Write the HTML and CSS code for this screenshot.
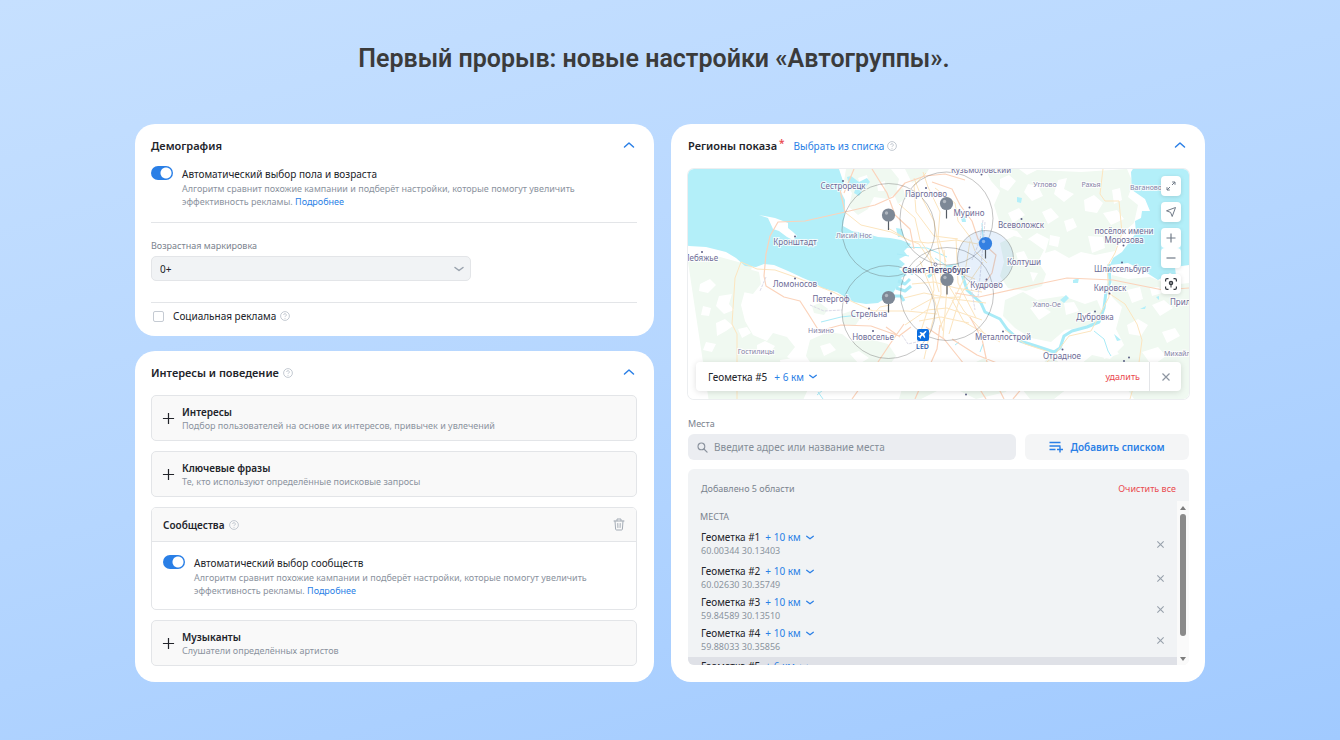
FILE: index.html
```html
<!DOCTYPE html>
<html lang="ru">
<head>
<meta charset="utf-8">
<meta name="viewport" content="width=device-width, initial-scale=1">
<title>Новые настройки «Автогруппы»</title>
<link rel="stylesheet" href="styles.css">
</head>
<body>
<svg class="sprite" aria-hidden="true">
  <symbol id="i-up" viewBox="0 0 12 8"><path d="M1.5 6 6 2l4.500 4" fill="none" stroke="currentColor" stroke-width="1.500" stroke-linecap="round" stroke-linejoin="round"/></symbol>
  <symbol id="i-down" viewBox="0 0 12 8"><path d="M2 2.500 6 5.500 10 2.500" fill="none" stroke="currentColor" stroke-width="1.500" stroke-linecap="round" stroke-linejoin="round"/></symbol>
  <symbol id="i-help" viewBox="0 0 10 10"><circle cx="5" cy="5" r="4.400" fill="none" stroke="currentColor" stroke-width=".8"/><path d="M3.700 4a1.300 1.300 0 1 1 1.900 1.100c-.5.300-.6.500-.6.900" fill="none" stroke="currentColor" stroke-width=".8"/><circle cx="5" cy="7.300" r=".5" fill="currentColor"/></symbol>
  <symbol id="i-plus" viewBox="0 0 14 14"><path d="M7 1v12M1 7h12" stroke="currentColor" stroke-width="1.300"/></symbol>
  <symbol id="i-close" viewBox="0 0 10 10"><path d="m1.500 1.500 7 7m0-7-7 7" stroke="currentColor" stroke-width="1.200"/></symbol>
</svg>
<main class="page">
  <h1 class="headline">Первый прорыв: новые настройки «Автогруппы».</h1>
  <div class="columns">
    <div class="left">
      <section class="card demography">
        <header class="card-head">
          <h2>Демография</h2>
          <button class="icon-btn collapse" aria-label="Свернуть"><svg class="chev"><use href="#i-up"/></svg></button>
        </header>
        <div class="switch-row">
          <input class="switch" type="checkbox" id="auto-age" checked>
          <div>
            <label class="switch-title" for="auto-age">Автоматический выбор пола и возраста</label>
            <p class="desc">Алгоритм сравнит похожие кампании и подберёт настройки, которые помогут увеличить эффективность рекламы. <a href="#">Подробнее</a></p>
          </div>
        </div>
        <div class="marking">
          <label class="field-label" for="age">Возрастная маркировка</label>
          <div class="select-wrap">
            <select id="age"><option>0+</option></select>
            <svg class="chev"><use href="#i-down"/></svg>
          </div>
        </div>
        <div class="social">
          <input class="check" type="checkbox" id="social">
          <label for="social">Социальная реклама</label>
          <svg class="help"><use href="#i-help"/></svg>
        </div>
      </section>

      <section class="card interests">
        <header class="card-head">
          <h2>Интересы и поведение</h2>
          <svg class="help"><use href="#i-help"/></svg>
          <button class="icon-btn collapse" aria-label="Свернуть"><svg class="chev"><use href="#i-up"/></svg></button>
        </header>
        <div class="options">
          <button class="option"><svg class="plus"><use href="#i-plus"/></svg><span><b>Интересы</b><small>Подбор пользователей на основе их интересов, привычек и увлечений</small></span></button>
          <button class="option"><svg class="plus"><use href="#i-plus"/></svg><span><b>Ключевые фразы</b><small>Те, кто используют определённые поисковые запросы</small></span></button>
          <div class="community">
            <header class="community-head">
              <h3>Сообщества</h3>
              <svg class="help"><use href="#i-help"/></svg>
              <button class="icon-btn trash" aria-label="Удалить"><svg viewBox="0 0 12 13"><path d="M1 3h10M4 2.800V1h4v1.800M2 3l.6 8.200q.1.800.9.800h5q.8 0 .9-.8L10 3M4.800 5.500l.1 4M7.200 5.500l-.1 4" fill="none" stroke="currentColor" stroke-linecap="round"/></svg></button>
            </header>
            <div class="switch-row">
              <input class="switch" type="checkbox" id="auto-comm" checked>
              <div>
                <label class="switch-title" for="auto-comm">Автоматический выбор сообществ</label>
                <p class="desc">Алгоритм сравнит похожие кампании и подберёт настройки, которые помогут увеличить эффективность рекламы. <a href="#">Подробнее</a></p>
              </div>
            </div>
          </div>
          <button class="option"><svg class="plus"><use href="#i-plus"/></svg><span><b>Музыканты</b><small>Слушатели определённых артистов</small></span></button>
        </div>
      </section>
    </div>

    <section class="card regions">
      <header class="card-head">
        <h2>Регионы показа<sup class="req">*</sup></h2>
        <a class="pick" href="#">Выбрать из списка</a>
        <svg class="help"><use href="#i-help"/></svg>
        <button class="icon-btn collapse" aria-label="Свернуть"><svg class="chev"><use href="#i-up"/></svg></button>
      </header>

      <div class="map">
        <svg class="map-art" viewBox="688 169 501 230" preserveAspectRatio="xMidYMid slice" role="img" aria-label="Карта Санкт-Петербурга">
          <rect x="688" y="169" width="501" height="230" fill="#fff"/>
          <g class="wood">
            <path d="M688 262l10-7 22 2 22 6 10 4-5 16-6 22 4 16 8 14 14 6 6-8 14 4 8 10-8 10 14 8 8 22-10 22h-89z"/>
            <path d="M846 169h45l8 10-3 14-8 6-14-2-6 12-10 6-9-8 3-14-8-12z"/>
            <path d="M905 169h24l-5 8-12 6zM893 192l10-4 3 10-8 6zM745 268l14 4 2 12-8 10-10-2z"/>
            <path d="M810 340l18-8 14 2 10 8 14-4 22 6 8 12-10 14-24-4-18 12-26-4-12-18zM842 314l12-4 7 7-6 9-12-2zM812 306l8-3 8 6-4 6-10-2z"/>
            <path d="M985 169l34 0 8 6 10-5 44 2 46-3 6 14-5 14 10 8-4 18-14 12-5 16-20 4-14-3-12 6-14-8-10 3 4-14-12-6-12 8-8-10-16-4-7-22 6-14-9-10z"/>
            <path d="M1000 243l14-7 16 4 14 10-6 12 8 12-4 12-16 5-18-3-8-12 4-14z"/>
            <path d="M1005 300l18-8 14 8 26-4 22 8 12-4 6 14-12 12-26 4-14 12-20-4-16-10-12-12z"/>
            <path d="M1112 275l16 4 22-2 20 8 19-2v116h-55l-8-12 6-14-18-4-10 12-24 4-10-12 22-18 18 4 14-14-8-16 6-22-10-10z"/>
            <path d="M1050 355l12 10 16 6-6 14-18 14h-24l-8-10 12-14zM960 370l24-12 10 8 20 6-8 20-30 7-20-10zM905 378l30-4 8 14-22 11h-22z"/>
          </g>
          <g fill="#fff">
            <path d="M700 284l10-5 6 6-8 8-9-2zM719 296l13-2-3 10 5 6-10 4-8-8zM703 306l8 2-2 8-8-1zM716 323l9-4 8 7-7 5-9 5zM738 329l9-2 4 6-9 5zM797 325c9 2 14 8 12 17s-10 10-15 2-5-14 3-19zM757 345l8-4 10 5-6 9-12 0zM706 342l10 2-4 8-9-2zM780 360l14-2 4 8-16 4z"/>
            <path d="M858 178l9-3 2 8-8 3zM877 184l8-3-1 10-6 0zM1000 179l9-4 7 6-8 10-8-4zM1028 184l10 2 5 10-11 5-8-9zM1058 180l9-2-3 11 10 5-10 8-10-8zM1008 213l11-5 6 7-12 8zM1042 212l9-4 8 9-11 7zM1064 221l9-3 4 9-10 5zM1084 200l10-5 9 8-6 10-12-2zM1112 190l8-2 2 12-8 4zM1103 213l14-3 7 9-13 6zM1050 235l10 2-2 10-9-2zM1088 236l15 1 2 11-13 5zM1016 253l8-2 4 8-9 5zM1030 272l8 1-5 9zM1030 308l10-3 11 7-12 8zM1064 303l10-1 5 9-13 4zM1083 314l10-3-1 9-9 2zM1127 290l13-3 3 12-11 4zM1152 305l12-5 9 8-13 8zM1127 325l11-6 10 6-7 11-12-2zM1162 332l13-4 5 8-13 7zM1142 352l16-5 8 9-14 10zM1101 348l12-2 6 8-15 5zM820 346l10-3 6 7-12 6zM850 354l9-3 10 7-10 6zM1150 288l9-1 3 6-10 3z"/>
          </g>
          <g fill="#b3eff9">
            <path d="M688 169h151l5 15-3 8 4 8v13l-2 13 9 5 12 2 14 4 12 1 11 2 10 4-7 7 3 4-8 4 6 5-6 5 8 6-6 3 4 5-9 5-4 7-8 4-6 4-12 1-12-2-9-5-8-5-15-4-7-5-12-5-15-7-14-6-10-1-8 3-11-1-9-8-10-6-20-5-17-1-12-3z"/>
            <path d="M851 176l8 6 8-4 3 4-7 7-4 7-5-3 2-6-7-2-2-8zM896 228l6 1 2 8-6 0z"/>
            <path d="M1137 169h52v96l-14 2 1 9-6-3-12 7-14-9-16-8-18 2 3-7 9-6 14-19-1-12 6-3 1-7h8l-5-12-13-9-1-18 5-8z"/>
            <path d="M1017 197l5 1-1 5-4-1zM1073 280l6-2-1 5-5 0zM1060 300l6-5 3 3-5 5zM1114 334l7 6-4 1zM1156 297l3-1v4zM1140 309l6-3-1 3zM961 218l4-2 1 6-4 0z"/>
          </g>
          <path d="M759 215l16 3 8 3 5 2v5l5 4 4 4-4 4-6-3-8-6-6-2-5-11z" fill="#fff"/>
          <path d="M898 281l7 3 5-5M896 288l9 3 6-5M892 296l9 0 3 5M905 269l8 5" class="stream s3"/>
          <path d="M1109 264l1 18-4 10-2 16-5 14-12 5-15 4-8 5-4 12-6 4-18-6-16-5-13-12-7-10-15-7-4-9-14-13-5-16-10-7-14 2-10 8" class="stream s3"/>
          <path d="M982 223l1 14-5 6M1094 331l10 8 4 12 3 5M821 322l20-5 18-2M980 352l3-8M905 247l22 1 20 9M935 258l12 8 12-2M897 254l12 2M818 392l5 7M955 345l4-3M817 395l6-5" class="stream"/>
          <g class="road minor">
            <path d="M741 262l-6 16-3 46 5 10v65M741 262l16 7 18 1 20 7 20 8 18 7 20 10 20 9 34 0 30 3M846 213l15 12 30 7 13 6 15 6 12 18 8 30M914 178l7 18 13 25 3 17 3 18 1 38-9 30-8 35M923 172l5 15 12 25-2 25 8 25M899 204l16 14 5 22 12 18 14 23 18 30 20 22M888 228l22 13 18 2 28-3 22 4"/>
            <path d="M935 188l20 15 3 18 12 16 5 14 12 12M914 272l20 2 20-3 21 8M912 284l22-2 22 6 26 4M904 298l20-5 30 6 32 4M911 310l22-12 28-1M920 261l12 30 11 40M930 250l4 40-14 44M944 250l3 38-4 50M956 238l2 45 18 35M970 241l-6 38-25 50M983 262l-22 32-12 40M952 300l12 22 36 20M919 321l22-4 28 6M905 325l22-15 20-2 35 12M926 173l-12 12 2 27 18 24 24 3"/>
            <path d="M1103 169l-3 25 5 7h14l3 32-7 20-8 14 2 30-18 34-22 5-15 20-14 12M1110 294l15 10 12 20 5 16-4 30-8 29M1005 330l20 14 24 8M868 320l12-13 10-2"/>
          </g>
          <g class="road">
            <path d="M845 212l-40 9-27 1-8 14-4 18-2 22 2 10 18 11 16 4 9 14 10 16 22-6 30 1 28 10 12-9M845 212l-5-22M845 212l30-7 18-8 12-14 20-7 20-2 20 6M872 169l15 24 8 22 15 14 4 20M932 182l20 7 8 16 12 16 6 18 18 16-4 18-12 17M844 193l10-24M904 324l-14 20-18 27-20 28M926 327l18 12 20 25 22 35M940 325l-3 24-22 50M970 317l12 22 6 28 16 32M955 293l24 4 50-11 38-8 46 2 25 5 25 5 26-2M952 339l25 16 35 14M900 337l-14-10M1013 399l15-18"/>
          </g>
          <g class="rail"><path d="M766 277l-6 14M810 305l14 6 18-1M983 220l-3 20-8 20M970 280l5 30M902 335l6 9 13-3M985 222l-4 45-3 30"/></g>
          <g class="zones">
            <circle cx="888.5" cy="230" r="46.5"/><circle cx="946.5" cy="218.500" r="46.5"/>
            <circle cx="888.5" cy="312" r="46.5"/><circle cx="947" cy="294" r="46.5"/>
            <circle class="active" cx="985.5" cy="258.500" r="28"/>
          </g>
          <g class="towns">
            <g fill="#5d6187"><circle cx="843" cy="181" r="1"/><circle cx="926" cy="188" r="1"/><circle cx="795" cy="236.500" r="1"/><circle cx="702" cy="252" r="1"/><circle cx="795" cy="278.500" r="1"/><circle cx="831" cy="293.500" r="1"/><circle cx="869" cy="308.500" r="1"/><circle cx="873" cy="331" r="1"/><circle cx="969.5" cy="207.500" r="1"/><circle cx="1021.500" cy="219" r="1"/><circle cx="981.5" cy="174.500" r="1"/><circle cx="986.500" cy="279.500" r="1"/><circle cx="1003" cy="331.500" r="1"/><circle cx="1062.500" cy="349.500" r="1"/><circle cx="1095" cy="311.500" r="1"/><circle cx="1109.500" cy="293.500" r="1"/><circle cx="1123.500" cy="245.500" r="1"/><circle cx="1122" cy="262.500" r="1"/><circle cx="1129" cy="357.500" r="1"/><circle cx="1124" cy="361" r="1"/><circle cx="966" cy="394.500" r="1"/></g>
            <circle cx="935.5" cy="264.500" r="1.500" fill="#fff" stroke="#77799a"/>
            <text x="843" y="189">Сестрорецк</text><text x="926" y="197">Парголово</text><text x="981" y="172.500">Кузьмоловский</text>
            <text x="1045" y="187" class="minor-town">Углово</text><text x="1091" y="187" class="minor-town">Рахья</text><text x="1130" y="190" class="minor-town from-left">Ваганово</text>
            <text x="969" y="216">Мурино</text><text x="1021" y="228">Всеволожск</text><text x="854" y="238" class="minor-town">Лисий Нос</text>
            <text x="1124" y="234">посёлок имени</text><text x="1124" y="243">Морозова</text><text x="795" y="245">Кронштадт</text><text x="701" y="261">Лебяжье</text>
            <text x="1024" y="265">Колтуши</text><text x="936" y="273" class="city">Санкт-Петербург</text><text x="1122" y="272">Шлиссельбург</text><text x="986.500" y="288">Кудрово</text>
            <text x="795" y="287">Ломоносов</text><text x="1110" y="291">Кировск</text><text x="831" y="302">Петергоф</text><text x="1047" y="307" class="minor-town">Хапо-Ое</text>
            <text x="869" y="317">Стрельна</text><text x="1095" y="320">Дубровка</text><text x="1170" y="305" class="from-left">Приладожский</text><text x="821" y="333" class="minor-town">Низино</text>
            <text x="873" y="340">Новоселье</text><text x="1003" y="340">Металлострой</text><text x="1062" y="359">Отрадное</text><text x="756" y="354" class="minor-town">Гостилицы</text><text x="1164" y="356" class="minor-town from-left">Михайловский</text>
            <text x="922.500" y="349" class="airport">LED</text>
          </g>
          <rect x="917" y="329" width="12" height="12" rx="2" fill="#0b6ee0"/>
          <path d="M919.500 332.500l1-.6 2.500 1.100 2.200-2 1.200-.2-.2 1.200-2 2.200 1.100 3-.8.800-2.100-2.500-1.500 1.500v1.200l-.7.500-.8-1.500-1.500-.8.500-.7h1.200l1.500-1.500z" fill="#fff"/>
          <defs><g id="pin"><path d="M0 6v9" stroke="#555c64" stroke-width="1.200"/><circle r="6.600" fill="currentColor"/><circle cx="-2" cy="-2" r="1.700" fill="#fff" opacity=".4"/></g></defs>
          <g color="#7d8896"><use href="#pin" x="888.5" y="215"/><use href="#pin" x="946.5" y="203.500"/><use href="#pin" x="888.5" y="297.500"/><use href="#pin" x="947" y="279.500"/></g>
          <g color="#3480e2"><use href="#pin" x="985.5" y="243.500"/></g>
        </svg>
        <div class="map-tools">
          <button class="tool" aria-label="Развернуть"><svg viewBox="0 0 12 12"><path d="M7 5l3-3M7.200 2H10v2.800M5 7l-3 3M2 7.200V10h2.800" fill="none" stroke="currentColor"/></svg></button>
          <button class="tool" aria-label="Моё положение"><svg viewBox="0 0 12 12"><path d="M1.500 4.800 10.500 1.500 7.200 10.500 5.600 6.400z" fill="none" stroke="currentColor" stroke-linejoin="round"/></svg></button>
          <div class="zoom">
            <button class="tool" aria-label="Приблизить"><svg viewBox="0 0 12 12"><path d="M6 1.500v9M1.500 6h9" stroke="currentColor" stroke-width="1.200"/></svg></button>
            <button class="tool" aria-label="Отдалить"><svg viewBox="0 0 12 12"><path d="M1.500 6h9" stroke="currentColor" stroke-width="1.200"/></svg></button>
          </div>
          <button class="tool locate" aria-label="Поставить метку"><svg viewBox="0 0 12 12"><path d="M.6 3.500V2q0-1.400 1.400-1.400h1.500M8.500.6H10q1.400 0 1.400 1.400v1.500M11.400 8.500V10q0 1.400-1.400 1.400H8.500M3.500 11.400H2Q.6 11.400.6 10V8.500" fill="none" stroke="currentColor" stroke-width="1.200"/><circle cx="6" cy="5" r="1.500" fill="none" stroke="currentColor" stroke-width="1.500"/><path d="M6 6.500V9.500" stroke="currentColor"/></svg></button>
        </div>
        <div class="map-bar">
          <span class="geo-name">Геометка #5</span>
          <button class="radius">+ 6 км <svg class="mini"><use href="#i-down"/></svg></button>
          <button class="danger remove">удалить</button>
          <button class="icon-btn bar-close" aria-label="Закрыть"><svg><use href="#i-close"/></svg></button>
        </div>
      </div>

      <label class="field-label places-label" for="place">Места</label>
      <div class="search-row">
        <div class="search">
          <svg viewBox="0 0 12 12"><circle cx="4.800" cy="4.800" r="3.700" fill="none" stroke="currentColor" stroke-width="1.200"/><path d="m7.600 7.600 3.400 3.400" stroke="currentColor" stroke-width="1.300" stroke-linecap="round"/></svg>
          <input type="text" id="place" placeholder="Введите адрес или название места">
        </div>
        <button class="add-list"><svg viewBox="0 0 14 12"><path d="M.5 1.500h11M.5 5h11M.5 8.500h6M8 8.500h6M11 5.500v6" stroke="currentColor" stroke-width="1.400"/></svg>Добавить списком</button>
      </div>

      <div class="places">
        <header class="places-head"><span>Добавлено 5 области</span><button class="danger">Очистить все</button></header>
        <div class="scroll">
          <div class="list">
            <h3>МЕСТА</h3>
            <ul>
              <li><div><span class="geo-name">Геометка #1</span><button class="radius">+ 10 км <svg class="mini"><use href="#i-down"/></svg></button><p>60.00344 30.13403</p></div><button class="icon-btn" aria-label="Удалить"><svg><use href="#i-close"/></svg></button></li>
              <li><div><span class="geo-name">Геометка #2</span><button class="radius">+ 10 км <svg class="mini"><use href="#i-down"/></svg></button><p>60.02630 30.35749</p></div><button class="icon-btn" aria-label="Удалить"><svg><use href="#i-close"/></svg></button></li>
              <li><div><span class="geo-name">Геометка #3</span><button class="radius">+ 10 км <svg class="mini"><use href="#i-down"/></svg></button><p>59.84589 30.13510</p></div><button class="icon-btn" aria-label="Удалить"><svg><use href="#i-close"/></svg></button></li>
              <li><div><span class="geo-name">Геометка #4</span><button class="radius">+ 10 км <svg class="mini"><use href="#i-down"/></svg></button><p>59.88033 30.35856</p></div><button class="icon-btn" aria-label="Удалить"><svg><use href="#i-close"/></svg></button></li>
              <li class="current"><div><span class="geo-name">Геометка #5</span><button class="radius">+ 6 км <svg class="mini"><use href="#i-down"/></svg></button></div></li>
            </ul>
          </div>
          <div class="bar" aria-hidden="true"><i class="arrow up"></i><i class="thumb"></i><i class="arrow down"></i></div>
        </div>
      </div>
    </section>
  </div>
</main>
</body>
</html>
```

FILE: styles.css
```css
:root {
  --blue: #2a7fe6;
  --ink: #22242a;
  --muted: #8b939e;
  --line: #e3e5e8;
  --red: #ea4a4f;
}
* { box-sizing: border-box; }
body {
  margin: 0;
  min-height: 100vh;
  background: linear-gradient(165deg, #c6e0ff 0%, #b5d6ff 50%, #a1caff 100%);
  color: var(--ink);
  font: 10px/16px "Noto Sans", sans-serif;
}
h1, h2, h3, p, ul { margin: 0; padding: 0; }
ul { list-style: none; }
button, input, select { font: inherit; color: inherit; margin: 0; }
button { border: 0; padding: 0; background: none; cursor: pointer; }
a { color: var(--blue); text-decoration: none; }
svg { display: block; flex: none; }
.sprite { position: absolute; width: 0; height: 0; }

.page { padding: 43px 135px 58px; }
.headline {
  margin: 0 32px 49px 0;
  text-align: center;
  color: #3b3b3b;
  font: 600 25px/32px Roboto, sans-serif;
}
.columns { display: grid; grid-template-columns: 519fr 534fr; gap: 17px; }
.left { display: flex; flex-direction: column; gap: 15px; }
.card { background: #fff; border-radius: 20px; padding: 13px 17px 16px 16px; }
.card-head { display: flex; align-items: center; height: 18px; }
.card-head h2 { font-size: 11px; line-height: 18px; font-weight: 600; }
.collapse { margin-left: auto; color: var(--blue); padding: 0 2px 2px; }
.chev { width: 12px; height: 8px; }
.help { width: 10px; height: 10px; margin-left: 4px; color: #b5bcc6; }

.demography { padding-bottom: 12px; }
.switch-row { display: flex; gap: 9px; }
.demography .switch-row { margin-top: 11px; padding-bottom: 14px; border-bottom: 1px solid var(--line); }
.switch {
  appearance: none;
  flex: none;
  width: 22px;
  height: 14px;
  border-radius: 7px;
  background: radial-gradient(circle at 15px 7px, #fff 5px, var(--blue) 6px);
}
.switch-title { display: block; line-height: 16px; }
.desc { color: var(--muted); font-size: 9px; line-height: 13px; max-width: 430px; }
.field-label { display: block; color: #7b838e; font-size: 9px; line-height: 14px; margin-bottom: 3px; }
.marking { padding: 16px 0 21px; border-bottom: 1px solid var(--line); }
.select-wrap { position: relative; width: 320px; max-width: 100%; }
.select-wrap select {
  appearance: none;
  display: block;
  width: 100%;
  height: 25px;
  padding: 0 8px;
  border: 1px solid var(--line);
  border-radius: 5px;
  background: #f1f3f5;
}
.select-wrap .chev { position: absolute; right: 6px; top: 9px; color: #99a2ad; }
.select-wrap .chev, .mini { pointer-events: none; }
.social { display: flex; align-items: center; padding-top: 5px; }
.check { appearance: none; width: 11px; height: 11px; margin: 0 9px 0 2px; border: 1px solid #c5cbd3; border-radius: 2px; background: #fff; }

.options { display: flex; flex-direction: column; gap: 10px; margin-top: 13px; }
.option {
  display: flex;
  align-items: center;
  gap: 7px;
  height: 46px;
  padding: 0 10px;
  border: 1px solid var(--line);
  border-radius: 5px;
  background: #f9f9f9;
  text-align: left;
}
.option b, .option small { display: block; }
.option b { line-height: 14px; font-weight: 600; }
.option small { color: var(--muted); font-size: 9px; line-height: 13px; }
.plus { width: 13px; height: 13px; }
.community { border: 1px solid var(--line); border-radius: 5px; overflow: hidden; }
.community-head { display: flex; align-items: center; height: 34px; padding: 0 11px; background: #f9f9f9; border-bottom: 1px solid var(--line); }
.community-head h3 { font-size: 10px; font-weight: 600; }
.trash { margin-left: auto; color: #a3abb5; }
.trash svg { width: 12px; height: 13px; }
.community .switch-row { padding: 13px 11px 12px; }

.regions { padding: 13px 16px 17px 17px; }
.req { color: var(--red); font-size: 10px; line-height: 0; margin-left: 2px; vertical-align: 3px; }
.pick { margin-left: 9px; }
.regions .card-head .help { margin-left: 3px; }
.regions .card-head .collapse { padding: 0 3px 2px; }
.map { position: relative; height: 230px; margin-top: 14px; border-radius: 6px; overflow: hidden; box-shadow: 0 0 0 1px #eceef0; }
.map-art { width: 100%; height: 100%; }
.wood { fill: #f0f9f1; }
.stream { fill: none; stroke: #a9ebf7; stroke-width: 1; stroke-linejoin: round; }
.s3 { stroke-width: 3; }
.road { fill: none; stroke: #fbd3bb; stroke-width: 1.2; stroke-linejoin: round; }
.road.minor { stroke: #fce5bf; stroke-width: 1; }
.rail { fill: none; stroke: #dcdbe8; stroke-width: 1; stroke-dasharray: 3 1; }
.zones { fill: none; stroke: #555; stroke-opacity: .35; }
.zones .active { fill: #3480e2; fill-opacity: .12; }
.towns text {
  font: 8px "Noto Sans", sans-serif;
  fill: #6d6b96;
  text-anchor: middle;
  paint-order: stroke;
  stroke: #fff;
  stroke-opacity: .8;
  stroke-width: 2px;
}
.towns .minor-town { font-size: 7px; fill: #8583a6; }
.towns .from-left { text-anchor: start; }
.towns .city { font-weight: 600; fill: #5b5982; }
.towns .airport { font-size: 7px; font-weight: 600; fill: #2a5db0; }
.map-tools { position: absolute; top: 7px; right: 8px; display: flex; flex-direction: column; gap: 6px; }
.tool { display: grid; place-items: center; width: 20px; height: 20px; border-radius: 4px; background: #fff; color: #707a87; }
.tool svg { width: 12px; height: 12px; }
.map-tools > * { box-shadow: 0 1px 4px #0002; border-radius: 4px; }
.locate { color: #33383f; }
.map-bar {
  position: absolute;
  left: 8px;
  right: 8px;
  bottom: 8px;
  display: flex;
  align-items: center;
  height: 29px;
  padding-left: 12px;
  border-radius: 4px;
  background: #fff;
  box-shadow: 0 1px 6px #0002;
}
.geo-name { line-height: 14px; }
.radius { display: inline-flex; align-items: center; gap: 4px; margin-left: 5px; color: var(--blue); line-height: 14px; }
.map-bar .radius { margin-left: 7px; }
.mini { width: 10px; height: 7px; }
.danger { color: var(--red); font-size: 9px; }
.remove { margin-left: auto; padding-right: 9px; }
.icon-btn svg { color: inherit; }
.bar-close { display: grid; place-items: center; width: 32px; height: 29px; border-left: 1px solid var(--line); color: #8d96a1; }
.bar-close svg { width: 10px; height: 10px; }

.places-label { margin-top: 18px; }
.search-row { display: grid; grid-template-columns: 1fr 164px; gap: 9px; }
.search { display: flex; align-items: center; gap: 6px; height: 26px; padding: 0 9px; border-radius: 6px; background: #ebedf1; color: #8a929d; }
.search svg { width: 11px; height: 11px; }
.search input { flex: 1; min-width: 0; border: 0; background: none; outline: 0; padding: 0; color: var(--ink); }
.search input::placeholder { color: #858d98; opacity: 1; }
.add-list { display: flex; align-items: center; justify-content: center; gap: 7px; border-radius: 6px; background: #f4f5f6; color: var(--blue); font-weight: 600; }
.add-list svg { width: 14px; height: 12px; }
.places { margin-top: 9px; border-radius: 6px; background: #f1f3f5; overflow: hidden; }
.places-head { display: flex; justify-content: space-between; padding: 12px 13px 4px; color: #7b838e; font-size: 9px; }
.scroll { display: flex; height: 164px; overflow: hidden; }
.list { flex: 1; overflow: hidden; padding-top: 8px; }
.list h3 { padding-left: 12px; margin-bottom: 6px; color: #7b838e; font-size: 9px; line-height: 15px; font-weight: 400; }
.list li { display: flex; align-items: flex-start; justify-content: space-between; height: 31px; padding: 0 12px 0 13px; }
.list li:first-child { margin-bottom: 3px; }
.list li p { color: #8b939e; font-size: 9px; line-height: 14px; }
.list li > div { display: grid; grid-template-columns: auto auto; justify-content: start; }
.list li p { grid-column: 1 / -1; }
.list .icon-btn { height: 28px; color: #98a1ac; }
.list .icon-btn svg { width: 9px; height: 9px; }
.list .current { padding-top: 2px; background: #dfe1e7; }
.bar { display: flex; flex-direction: column; align-items: center; width: 12px; padding: 5px 0 4px; background: #fafafa; }
.thumb { width: 6px; height: 122px; margin-top: 4px; border-radius: 3px; background: #8a8a8a; }
.arrow { border: 3px solid transparent; }
.arrow.up { border-top: 0; border-bottom: 4px solid #7c7c7c; }
.arrow.down { margin-top: auto; border-bottom: 0; border-top: 4px solid #7c7c7c; }
```
